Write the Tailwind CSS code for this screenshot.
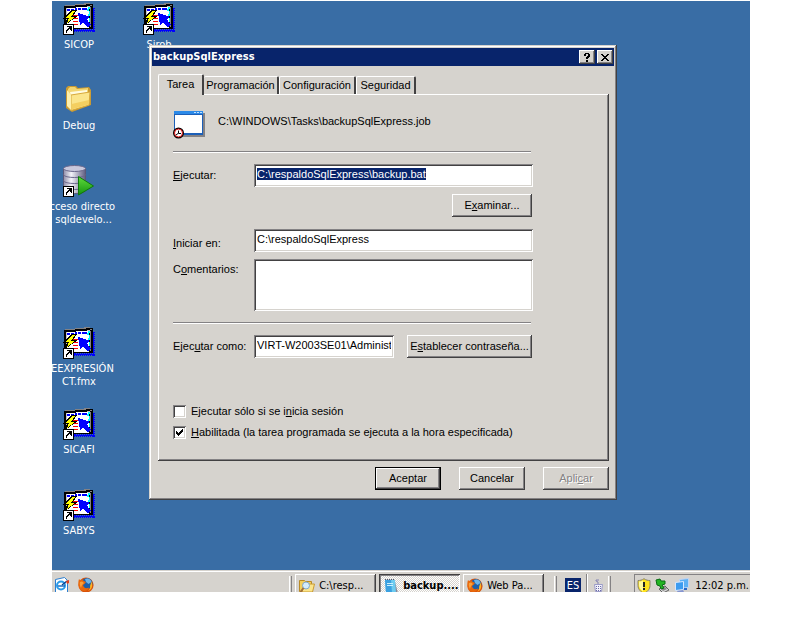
<!DOCTYPE html>
<html lang="es">
<head>
    <meta charset="UTF-8">
    <meta name="viewport" content="width=device-width, initial-scale=1.0">
    <script src="https://cdn.jsdelivr.net/npm/@tailwindcss/browser@4"></script>
    <title>backupSqlExpress</title>
</head>
<body class="bg-white">

    <!-- Shared icons -->
    <svg class="hidden">
        <symbol id="shortcut" viewBox="0 0 11 11" shape-rendering="crispEdges">
            <path fill="#000" d="M0 0h11v11H0z"/>
            <path fill="#fff" d="M1 1h9v9H1z"/>
            <path fill="#000" d="M4 2h5v5H8V6H7V5H6v1H5v1H4v2H3V6h1V5h1V4h1V3H4z"/>
        </symbol>
        <symbol id="forms" viewBox="0 0 32 32" shape-rendering="crispEdges">
            <path fill="#0000ff" d="M29 5h3v24H11v-3h18z"/>
            <path fill="#3a6ea5" d="M31 6h1v1h-1zM31 8h1v1h-1zM31 10h1v1h-1zM31 12h1v1h-1zM31 14h1v1h-1zM31 16h1v1h-1zM31 18h1v1h-1zM31 20h1v1h-1zM31 22h1v1h-1zM31 24h1v1h-1zM31 26h1v1h-1zM29 26h1v1h-1zM27 26h1v1h-1zM25 26h1v1h-1zM23 26h1v1h-1zM21 26h1v1h-1zM19 26h1v1h-1zM17 26h1v1h-1zM15 26h1v1h-1zM13 26h1v1h-1zM28 28h1v1h-1zM26 28h1v1h-1zM24 28h1v1h-1zM22 28h1v1h-1zM20 28h1v1h-1zM18 28h1v1h-1zM16 28h1v1h-1zM14 28h1v1h-1zM12 28h1v1h-1z"/>
            <path fill="#848284" d="M2 2h10V1h9V0h6v2H13v1H2z"/>
            <path fill="#000" d="M1 3h11V2h11V1h7v25H11v-2H1z"/>
            <path fill="#fff" d="M3 5h10V4h13v21H3z"/>
            <path fill="#848284" d="M27 2h2v1h-2zM27 4h1v20h-1z"/>
            <path fill="#c6c3c6" d="M24 3h3v1h-3zM3 5h1v18H3z"/>
            <path fill="#00ffff" d="M25 4h2v2h-2zM24 6h2v2h-2zM26 8h1v3h-1zM25 11h2v2h-2zM26 15h1v4h-1zM25 20h2v3h-2z"/>
            <path fill="#0000ff" d="M4 6h3v2H4zM8 6h3v2H8zM12 5h2v3h-2zM15 5h3v2h-3zM19 5h5v2h-5z"/>
            <path fill="#ff0000" d="M10 12h5v1h-5zM4 11h3v1H4zM11 15h4v1h-4zM10 18h5v1h-5zM11 21h4v1h-4z"/>
            <path fill="#0000ff" d="M15 10l12 4-3 2.500 4 5.500-3 2.500-5-5.500-3 3z"/>
            <path fill="#000" d="M8 7h6l-4 6h5L2 22l2-6H0z"/>
            <path fill="#ffff00" d="M9 8h3l-4 6h4L4 20l2-5H2z"/>
            <use href="#shortcut" x="0" y="21" width="11" height="11"/>
        </symbol>
        <symbol id="firefox" viewBox="0 0 16 16">
            <circle cx="8" cy="8" r="7.6" fill="#d9540b"/>
            <circle cx="9" cy="6.4" r="5.4" fill="#1d5fa8"/>
            <path fill="#6cb4e8" d="M7 2c3-1.500 6 0 6.500 3l-3 2L8 5z"/>
            <path fill="#ffb321" d="M13.500 4.500c1.500 4 .5 8-3.500 9.500 2-2 2.500-3.500 2-5z"/>
            <path fill="#e8680c" d="M1 2l1.500 1.500C4 2.500 5 3 6 4l2 1-1.500 2L5 8c.5 3 3 4 6 2.500C10 14 5 15.500 2 12 0 9 0 5 1 2z"/>
            <path fill="#f9a13a" d="M2 5l2-.5L6 6 4 8l-1 3C2 9 1.500 7 2 5z"/>
        </symbol>
    </svg>

    <main class="flex h-screen flex-col px-[52px] pt-px pb-[38px] font-['DejaVu_Sans_Condensed','Noto_Sans',sans-serif] text-[11px] text-black">

        <!-- Desktop -->
        <section class="relative grow overflow-hidden bg-[#396da5]">
            <div class="-ml-[13px] grid grid-cols-[repeat(2,80px)] auto-rows-[81px] pt-0.5 text-center leading-[13px] text-white">
                <a href="#" class="flex flex-col items-center gap-[3px]">
                    <svg class="size-8"><use href="#forms"/></svg>
                    <span>SICOP</span>
                </a>
                <a href="#" class="flex flex-col items-center gap-[3px]">
                    <svg class="size-8"><use href="#forms"/></svg>
                    <span>Sirob</span>
                </a>
                <a href="#" class="col-start-1 flex flex-col items-center gap-[3px]">
                    <svg class="size-8" viewBox="0 0 32 32">
                        <path fill="#c99a32" d="M3 4l2-2h8l2 2 11-1 2 3v15L9 28l-6-4z"/>
                        <path fill="#f3d672" d="M5 5l2-2h5l2 2 11-1v13H5z"/>
                        <path fill="#fffbe0" d="M7 8l17-2v3L8 12z"/>
                        <path fill="#fbe58c" stroke="#d8a93c" d="M8 11l19-3-1 13L8 26.500z"/>
                        <path fill="#f4cf60" d="M8.500 20l17.500-4-.5 4.500-17 5z"/>
                        <path fill="#fdf0ae" d="M4 6l4 5v15l-4-4z"/>
                    </svg>
                    <span>Debug</span>
                </a>
                <a href="#" class="col-start-1 flex flex-col items-center gap-[3px]">
                    <svg class="size-8" viewBox="0 0 32 32">
                        <defs>
                            <linearGradient id="cyl"><stop offset="0" stop-color="#8f8ca8"/><stop offset=".35" stop-color="#f4f4fa"/><stop offset="1" stop-color="#5f5c80"/></linearGradient>
                            <linearGradient id="play" x2="0" y2="1"><stop offset="0" stop-color="#5fdc3c"/><stop offset="1" stop-color="#159410"/></linearGradient>
                        </defs>
                        <path fill="url(#cyl)" stroke="#5a5878" d="M.5 3.500v22c0 4 22 4 22 0v-22z"/>
                        <path fill="none" stroke="#6b688c" d="M.5 9.500c0 4 22 4 22 0M.5 15.500c0 4 22 4 22 0M.5 21.500c0 4 22 4 22 0"/>
                        <ellipse cx="11.500" cy="3.500" rx="11" ry="3" fill="#c9c8dc" stroke="#6b688c"/>
                        <path fill="url(#play)" stroke="#0d7a0a" d="M15.500 11.500v18.500L30.500 21z"/>
                        <use href="#shortcut" x="0" y="21" width="11" height="11"/>
                    </svg>
                    <span class="whitespace-nowrap">Acceso directo<br>a sqldevelo...</span>
                </a>
                <a href="#" class="col-start-1 row-start-5 flex flex-col items-center gap-[3px]">
                    <svg class="size-8"><use href="#forms"/></svg>
                    <span class="whitespace-nowrap">REEXPRESIÓN<br>CT.fmx</span>
                </a>
                <a href="#" class="col-start-1 row-start-6 flex flex-col items-center gap-[3px]">
                    <svg class="size-8"><use href="#forms"/></svg>
                    <span>SICAFI</span>
                </a>
                <a href="#" class="col-start-1 row-start-7 flex flex-col items-center gap-[3px]">
                    <svg class="size-8"><use href="#forms"/></svg>
                    <span>SABYS</span>
                </a>
            </div>

            <!-- Dialog -->
            <div role="dialog" aria-labelledby="titulo" class="absolute top-[44px] left-[97px] w-[468px] bg-[#d6d3ce] p-[3px] font-['Liberation_Sans',Arial,sans-serif] shadow-[inset_-1px_-1px_#424142,inset_1px_1px_#d6d3ce,inset_-2px_-2px_#848284,inset_2px_2px_#fff]">
                <div class="flex h-[18px] items-center gap-0.5 bg-[#08246b] px-px">
                    <h1 id="titulo" class="grow font-['DejaVu_Sans_Condensed','Noto_Sans',sans-serif] font-bold text-white">backupSqlExpress</h1>
                    <button type="button" aria-label="Ayuda" class="grid h-3.5 w-4 place-items-center bg-[#d6d3ce] shadow-[inset_-1px_-1px_#424142,inset_1px_1px_#fff,inset_-2px_-2px_#848284]">
                        <svg class="h-[9px] w-[7px]" viewBox="0 0 7 9" shape-rendering="crispEdges"><path d="M1 0h4v1h1v3H5v1H4v1H2V4h1V3h1V1H2v2H0V1h1zM2 7h2v2H2z"/></svg>
                    </button>
                    <button type="button" aria-label="Cerrar" class="grid h-3.5 w-4 place-items-center bg-[#d6d3ce] shadow-[inset_-1px_-1px_#424142,inset_1px_1px_#fff,inset_-2px_-2px_#848284]">
                        <svg class="h-[7px] w-2" viewBox="0 0 8 7" shape-rendering="crispEdges"><path d="M0 0h2v1h1v1h2V1h1V0h2v1H7v1H6v1H5v1h1v1h1v1h1v1H6V6H5V5H3v1H2v1H0V6h1V5h1V4h1V3H2V2H1V1H0z"/></svg>
                    </button>
                </div>

                <div class="pt-2 pr-[5px] pb-[7px] pl-1.5">
                    <!-- Tabs -->
                    <div role="tablist" class="flex items-end">
                        <button type="button" role="tab" aria-selected="true" class="relative -mb-px h-[21px] w-[46px] rounded-t-[2px] border-t border-r-2 border-l border-t-white border-r-[#424142] border-l-white bg-[#d6d3ce] pb-0.5">Tarea</button>
                        <button type="button" role="tab" aria-selected="false" class="h-[18px] w-[75px] rounded-t-[2px] border-t border-r-2 border-t-white border-r-[#424142]">Programación</button>
                        <button type="button" role="tab" aria-selected="false" class="h-[18px] w-[77px] rounded-t-[2px] border-t border-r-2 border-l border-t-white border-r-[#424142] border-l-white">Configuración</button>
                        <button type="button" role="tab" aria-selected="false" class="h-[18px] w-[60px] rounded-t-[2px] border-t border-r-2 border-l border-t-white border-r-[#424142] border-l-white">Seguridad</button>
                    </div>

                    <!-- Tab page -->
                    <form id="tarea" class="px-[15px] pt-4 pb-[22px] shadow-[inset_-1px_-1px_#424142,inset_1px_1px_#fff,inset_-2px_-2px_#848284]">
                        <div class="flex gap-[13px]">
                            <svg class="size-8" viewBox="0 0 32 32">
                                <path fill="#848284" d="M3 3h29v24H3z"/>
                                <path fill="#1c5fb8" d="M1 1h29v24H1z"/>
                                <path fill="#2c8ae8" d="M1 1h29v3H1z"/>
                                <path fill="#fff" d="M2 5h27v18H2z"/>
                                <path fill="#bfe0ff" d="M21 2h2v1h-2zM24 2h2v1h-2zM27 2h2v1h-2z"/>
                                <circle cx="5.500" cy="23" r="5.500" fill="#000"/>
                                <circle cx="5.500" cy="23" r="4" fill="#fff" stroke="#e01010"/>
                                <path fill="none" stroke="#000" d="M5.500 20.500v3H8M3 25l2-1.500"/>
                            </svg>
                            <p class="pt-[3px] leading-4">C:\WINDOWS\Tasks\backupSqlExpress.job</p>
                        </div>
                        <hr class="mt-[9px] w-[358px] border-t border-b border-t-[#848284] border-b-white">

                        <div class="mt-[11px] grid w-[360px] grid-cols-[81px_1fr] gap-y-[7px]">
                            <label for="ejecutar" class="self-center"><u>E</u>jecutar:</label>
                            <input type="text" id="ejecutar" value="C:\respaldoSqlExpress\backup.bat" class="h-[23px] w-full bg-white px-[3px] pb-1 shadow-[inset_1px_1px_#848284,inset_-1px_-1px_#fff,inset_2px_2px_#424142,inset_-2px_-2px_#d6d3ce] outline-none selection:bg-[#08246b] selection:text-white">
                            <button type="button" class="col-start-2 mr-px h-[23px] w-20 justify-self-end bg-[#d6d3ce] shadow-[inset_-1px_-1px_#424142,inset_1px_1px_#fff,inset_-2px_-2px_#848284]">E<u>x</u>aminar...</button>
                            <label for="iniciar" class="self-end pb-px"><u>I</u>niciar en:</label>
                            <input type="text" id="iniciar" value="C:\respaldoSqlExpress" class="mt-[5px] h-[23px] w-full bg-white px-[3px] pb-1 shadow-[inset_1px_1px_#848284,inset_-1px_-1px_#fff,inset_2px_2px_#424142,inset_-2px_-2px_#d6d3ce] outline-none">
                            <label for="comentarios" class="pt-0.5">C<u>o</u>mentarios:</label>
                            <textarea id="comentarios" class="block h-[52px] w-full resize-none bg-white p-[3px] shadow-[inset_1px_1px_#848284,inset_-1px_-1px_#fff,inset_2px_2px_#424142,inset_-2px_-2px_#d6d3ce] outline-none"></textarea>
                        </div>
                        <hr class="mt-[11px] w-[358px] border-t border-b border-t-[#848284] border-b-white">

                        <div class="mt-[11px] grid w-[359px] grid-cols-[81px_140px_125px] items-center gap-x-0">
                            <label for="cuenta">Ejec<u>u</u>tar como:</label>
                            <input type="text" id="cuenta" value="VIRT-W2003SE01\Administ" class="h-[23px] w-full bg-white px-[3px] pb-1 shadow-[inset_1px_1px_#848284,inset_-1px_-1px_#fff,inset_2px_2px_#424142,inset_-2px_-2px_#d6d3ce] outline-none">
                            <button type="button" class="ml-[13px] h-[23px] w-[125px] bg-[#d6d3ce] whitespace-nowrap shadow-[inset_-1px_-1px_#424142,inset_1px_1px_#fff,inset_-2px_-2px_#848284]">E<u>s</u>tablecer contraseña...</button>
                        </div>

                        <div class="mt-[47px] grid gap-2">
                            <label class="flex h-[13px] items-center gap-[5px]">
                                <span class="grid">
                                    <input type="checkbox" name="sesion" class="peer col-start-1 row-start-1 size-[13px] appearance-none bg-white shadow-[inset_1px_1px_#848284,inset_-1px_-1px_#fff,inset_2px_2px_#424142,inset_-2px_-2px_#d6d3ce]">
                                    <svg class="col-start-1 row-start-1 hidden size-[7px] place-self-center peer-checked:block" viewBox="0 0 7 7" shape-rendering="crispEdges"><path d="M0 2h1v1h1v1h1V3h1V2h1V1h1V0h1v3H6v1H5v1H4v1H3v1H2V6H1V5H0z"/></svg>
                                </span>
                                <span>Ejecutar sólo si se i<u>n</u>icia sesión</span>
                            </label>
                            <label class="flex h-[13px] items-center gap-[5px]">
                                <span class="grid">
                                    <input type="checkbox" name="habilitada" checked class="peer col-start-1 row-start-1 size-[13px] appearance-none bg-white shadow-[inset_1px_1px_#848284,inset_-1px_-1px_#fff,inset_2px_2px_#424142,inset_-2px_-2px_#d6d3ce]">
                                    <svg class="col-start-1 row-start-1 hidden size-[7px] place-self-center peer-checked:block" viewBox="0 0 7 7" shape-rendering="crispEdges"><path d="M0 2h1v1h1v1h1V3h1V2h1V1h1V0h1v3H6v1H5v1H4v1H3v1H2V6H1V5H0z"/></svg>
                                </span>
                                <span><u>H</u>abilitada (la tarea programada se ejecuta a la hora especificada)</span>
                            </label>
                        </div>
                    </form>

                    <div class="mt-1.5 flex justify-end gap-[18px]">
                        <button type="submit" form="tarea" class="h-[23px] w-[66px] border border-black bg-[#d6d3ce] shadow-[inset_-1px_-1px_#424142,inset_1px_1px_#fff,inset_-2px_-2px_#848284]">Aceptar</button>
                        <button type="button" class="h-[23px] w-[66px] bg-[#d6d3ce] shadow-[inset_-1px_-1px_#424142,inset_1px_1px_#fff,inset_-2px_-2px_#848284]">Cancelar</button>
                        <button type="button" disabled class="h-[23px] w-[66px] bg-[#d6d3ce] text-[#848284] shadow-[inset_-1px_-1px_#424142,inset_1px_1px_#fff,inset_-2px_-2px_#848284] text-shadow-[1px_1px_#fff]">Apli<u>c</u>ar</button>
                    </div>
                </div>
            </div>
        </section>

        <!-- Taskbar -->
        <footer class="flex h-[22px] shrink-0 overflow-hidden bg-[#d6d3ce] pt-1 pl-0.5 shadow-[inset_0_1px_#d6d3ce,inset_0_2px_#fff]">
            <div class="flex grow gap-2 pt-[3px]">
                <button type="button" aria-label="Internet Explorer" class="size-4">
                    <svg class="size-4" viewBox="0 0 16 16">
                        <path fill="#fff" stroke="#2c7fd0" d="M1.500 2.500l9-2 3 3v12h-12z"/>
                        <circle cx="7" cy="8.500" r="4" fill="none" stroke="#2a9ae8" stroke-width="2"/>
                        <path stroke="#1b6ec2" stroke-width="1.500" d="M4 9h7"/>
                        <path stroke="#0a3f8c" stroke-width="1.500" d="M8 8l5-4"/>
                        <path fill="#e0401c" d="M12 4l3-1v3l-2 1z"/>
                    </svg>
                </button>
                <button type="button" aria-label="Firefox" class="size-4"><svg class="size-4"><use href="#firefox"/></svg></button>
            </div>
            <div class="flex h-6 items-stretch gap-[3px]">
                <span class="my-0.5 w-[3px] bg-[#d6d3ce] shadow-[inset_1px_0_#fff,inset_-1px_0_#848284]"></span>
                <button type="button" class="flex w-[81px] items-center gap-1 bg-[#d6d3ce] px-1 whitespace-nowrap shadow-[inset_-1px_-1px_#424142,inset_1px_1px_#fff,inset_-2px_-2px_#848284]">
                    <svg class="size-4 shrink-0" viewBox="0 0 16 16">
                        <path fill="#f3cf5c" stroke="#b98a24" d="M.5 2.500h5l1 1h6v10H.5z"/>
                        <path fill="#fbe58c" stroke="#c99a32" d="M3 14l2-8h10.500l-2 8z"/>
                        <circle cx="7" cy="7.500" r="3.500" fill="#d4ecfb" stroke="#7fa8cc"/>
                        <path stroke="#a0703c" stroke-width="2" d="M4.500 10L1.500 14"/>
                    </svg>
                    C:\resp...
                </button>
                <button type="button" class="flex w-[81px] items-center gap-1 bg-[repeating-conic-gradient(#fff_0_25%,#d6d3ce_0_50%)] bg-[length:2px_2px] px-1 font-bold whitespace-nowrap shadow-[inset_1px_1px_#424142,inset_-1px_-1px_#fff,inset_2px_2px_#848284]">
                    <svg class="size-4 shrink-0" viewBox="0 0 16 16">
                        <path fill="#8a8a9a" d="M12 4l3 11-3 1z"/>
                        <path fill="#6ccbf0" d="M2 2h10l1 13H3z"/>
                        <path fill="#3aa0e0" d="M2 2h6l1 13H3z"/>
                        <path fill="#c8f0ff" d="M4 5h6v1H4zM4 7h6v1H4z"/>
                        <path stroke="#4a5a78" stroke-dasharray="1 1" d="M2 1.500h10"/>
                    </svg>
                    backup....
                </button>
                <button type="button" class="flex w-[81px] items-center gap-1 bg-[#d6d3ce] px-1 whitespace-nowrap shadow-[inset_-1px_-1px_#424142,inset_1px_1px_#fff,inset_-2px_-2px_#848284]">
                    <svg class="size-4 shrink-0"><use href="#firefox"/></svg>
                    Web Pa...
                </button>
            </div>
            <div class="flex h-6 items-center pl-2.5">
                <span class="h-5 w-[3px] bg-[#d6d3ce] shadow-[inset_1px_0_#fff,inset_-1px_0_#848284]"></span>
                <button type="button" class="ml-2 h-4 w-4 bg-[#08246b] text-white">ES</button>
                <span class="ml-[5px] h-full w-0.5 bg-white shadow-[inset_1px_0_#848284]"></span>
                <svg class="ml-1 size-3.5" viewBox="0 0 14 14">
                    <path fill="none" stroke="#8484b4" d="M6 5V3l-2-1V1h3"/>
                    <path fill="#f4f4fc" stroke="#9c9cc8" d="M2.500 5.500h8l-1 7h-6z"/>
                    <path stroke="#6c6ca8" stroke-dasharray="1 1" d="M4 7.500h6M4 9.500h5M4 11.500h5"/>
                </svg>
                <span class="ml-0.5 h-5 w-[3px] bg-[#d6d3ce] shadow-[inset_1px_0_#fff,inset_-1px_0_#848284]"></span>
            </div>
            <div class="ml-[23px] flex h-6 items-center gap-[3px] pr-px pl-0.5 shadow-[inset_1px_1px_#848284]">
                <svg class="size-4" viewBox="0 0 16 16">
                    <path fill="#ffe21c" stroke="#8a8468" d="M8 .7c2 1.500 4 1.800 6 1.800v5c0 4-3 6.500-6 8-3-1.500-6-4-6-8v-5c2 0 4-.3 6-1.800z"/>
                    <path fill="#fff9a0" d="M3 3.500c2 0 3-.5 4-1v11C5 12 3 10 3 7z"/>
                    <path fill="#222" d="M7 4h2v5H7zM7 10h2v2H7z"/>
                </svg>
                <svg class="size-4" viewBox="0 0 16 16">
                    <path fill="#d8d8d8" stroke="#606060" d="M4 11l6-3 4 4-6 3z"/>
                    <path fill="#888" d="M6 11l4-2 2 2-4 2z"/>
                    <path fill="#22b422" stroke="#0a6c14" d="M1 2l4-1 1 2 4 0v3L7 7l2 3-3 1-1-3-3-1z"/>
                </svg>
                <svg class="size-4" viewBox="0 0 16 16">
                    <path fill="#5cb0f4" stroke="#c0d4f4" d="M5.500 1.500l9-1v9l-9 1z"/>
                    <path fill="#2868c8" d="M8 10h5v2H8z"/>
                    <path fill="#3c9cf0" stroke="#d8e8ff" d="M1.500 4.500l8-1v8l-8 1z"/>
                    <path fill="#8494d0" d="M3 13l6-1 1 2-6 1z"/>
                </svg>
                <time class="ml-0.5 whitespace-nowrap">12:02 p.m.</time>
            </div>
        </footer>
    </main>

    <script>
        const ejecutar = document.getElementById('ejecutar');
        ejecutar.focus();
        ejecutar.select();
    </script>
</body>
</html>
